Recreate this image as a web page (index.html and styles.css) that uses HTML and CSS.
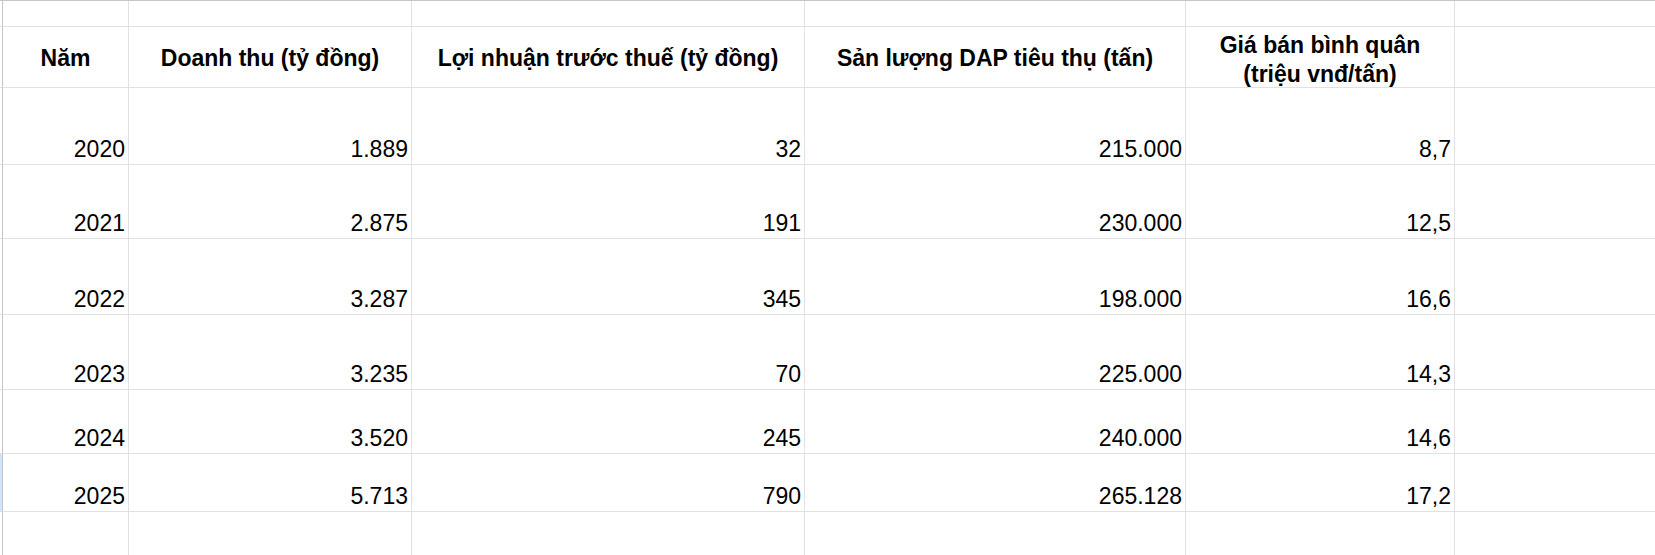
FILE: index.html
```html
<!DOCTYPE html>
<html lang="vi">
<head>
<meta charset="utf-8">
<title>Bảng số liệu</title>
<link rel="stylesheet" href="styles.css">
</head>
<body>
<div class="sheet">
  <div class="row">
    <div class="rh"></div><div class="c"></div><div class="c"></div><div class="c"></div><div class="c"></div><div class="c"></div><div class="c"></div>
  </div>
  <div class="row">
    <div class="rh"></div>
    <div class="c h">Năm</div>
    <div class="c h">Doanh thu (tỷ đồng)</div>
    <div class="c h">Lợi nhuận trước thuế (tỷ đồng)</div>
    <div class="c h">Sản lượng DAP tiêu thụ (tấn)</div>
    <div class="c h h2">Giá bán bình quân<br>(triệu vnđ/tấn)</div>
    <div class="c"></div>
  </div>
  <div class="row">
    <div class="rh"></div>
    <div class="c n">2020</div><div class="c n">1.889</div><div class="c n">32</div><div class="c n">215.000</div><div class="c n">8,7</div><div class="c"></div>
  </div>
  <div class="row">
    <div class="rh"></div>
    <div class="c n">2021</div><div class="c n">2.875</div><div class="c n">191</div><div class="c n">230.000</div><div class="c n">12,5</div><div class="c"></div>
  </div>
  <div class="row">
    <div class="rh"></div>
    <div class="c n">2022</div><div class="c n">3.287</div><div class="c n">345</div><div class="c n">198.000</div><div class="c n">16,6</div><div class="c"></div>
  </div>
  <div class="row">
    <div class="rh"></div>
    <div class="c n">2023</div><div class="c n">3.235</div><div class="c n">70</div><div class="c n">225.000</div><div class="c n">14,3</div><div class="c"></div>
  </div>
  <div class="row">
    <div class="rh"></div>
    <div class="c n">2024</div><div class="c n">3.520</div><div class="c n">245</div><div class="c n">240.000</div><div class="c n">14,6</div><div class="c"></div>
  </div>
  <div class="row">
    <div class="rh sel"></div>
    <div class="c n">2025</div><div class="c n">5.713</div><div class="c n">790</div><div class="c n">265.128</div><div class="c n">17,2</div><div class="c"></div>
  </div>
  <div class="row">
    <div class="rh"></div><div class="c"></div><div class="c"></div><div class="c"></div><div class="c"></div><div class="c"></div><div class="c"></div>
  </div>
</div>
</body>
</html>
```
FILE: styles.css
```css
html, body {
  margin: 0;
  padding: 0;
  background: #ffffff;
  overflow: hidden;
}

.sheet {
  display: grid;
  grid-template-columns: 3px 126px 283px 393px 381px 269px 220px;
  grid-template-rows: 26px 61px 77px 74px 76px 75px 64px 58px 60px;
  border-top: 1px solid #c4c7c5;
  font-family: "Liberation Sans", Arial, sans-serif;
  font-size: 23px;
  color: #000000;
  width: max-content;
}

.row {
  display: contents;
}

.rh,
.c {
  box-sizing: border-box;
  border-bottom: 1px solid #e1e1e1;
  border-right: 1px solid #e1e1e1;
}

.rh {
  border-right-color: #c4c7c5;
}

.rh.sel {
  background: #d3e3fd;
}

.c {
  display: flex;
  line-height: normal;
  padding: 0 3px 1px 3px;
  white-space: nowrap;
}

.h {
  font-weight: 700;
  line-height: 27px;
  align-items: center;
  justify-content: center;
  text-align: center;
  padding-top: 2px;
  padding-bottom: 0;
}

.h2 {
  line-height: 29px;
  align-items: flex-start;
  padding-top: 4px;
}

.n {
  align-items: flex-end;
  justify-content: flex-end;
}
```
